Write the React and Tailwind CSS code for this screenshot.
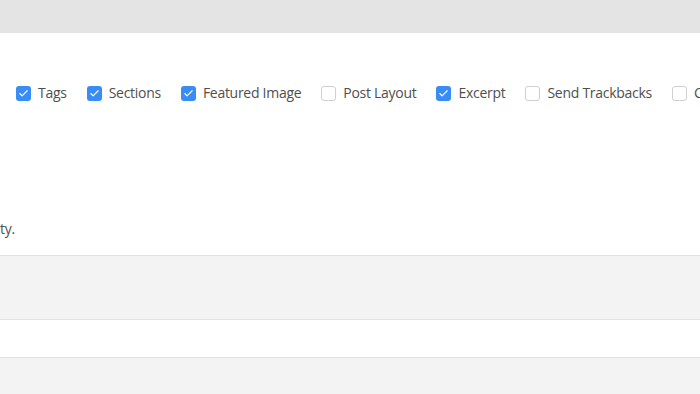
import { Check } from 'lucide-react'

const OPTIONS = [
  { label: 'Tags', checked: true },
  { label: 'Sections', checked: true },
  { label: 'Featured Image', checked: true },
  { label: 'Post Layout', checked: false },
  { label: 'Excerpt', checked: true },
  { label: 'Send Trackbacks', checked: false },
  { label: 'Custom Fields', checked: false },
]

function Box({ checked }) {
  return checked ? (
    <span className="flex h-[15px] w-[15px] shrink-0 items-center justify-center rounded-[3px] bg-[#3a8cf5]">
      <Check className="h-[11px] w-[11px] text-white" strokeWidth={2.5} />
    </span>
  ) : (
    <span className="h-[15px] w-[15px] shrink-0 rounded-[3px] border border-[#cfcfcf] bg-white" />
  )
}

export default function App() {
  return (
    <div className="flex h-[394px] w-[700px] flex-col overflow-hidden bg-[#f3f3f3] text-[#4f4f4f] [font-family:'Open_Sans',sans-serif]">
      <div className="h-[33px] shrink-0 bg-[#e4e4e4]" />

      <section className="flex h-[223px] shrink-0 flex-col overflow-hidden border-b border-[#e2e2e2] bg-white">
        <div className="mt-[50px] flex items-center whitespace-nowrap pl-4 text-[14px] leading-[20px] tracking-[-0.28px]">
          {OPTIONS.map((o, i) => (
            <label key={o.label} className={`flex shrink-0 items-center gap-[7px] ${i > 0 ? 'ml-5' : ''}`}>
              <Box checked={o.checked} />
              <span>{o.label}</span>
            </label>
          ))}
        </div>
        <p className="mt-[116px] text-[14px] leading-[20px] tracking-[-0.2px]">ty.</p>
      </section>

      <div className="h-[64px] shrink-0 border-b border-[#e2e2e2] bg-[#f3f3f3]" />
      <div className="h-[38px] shrink-0 border-b border-[#e2e2e2] bg-white" />
      <div className="flex-1 bg-[#f3f3f3]" />
    </div>
  )
}
